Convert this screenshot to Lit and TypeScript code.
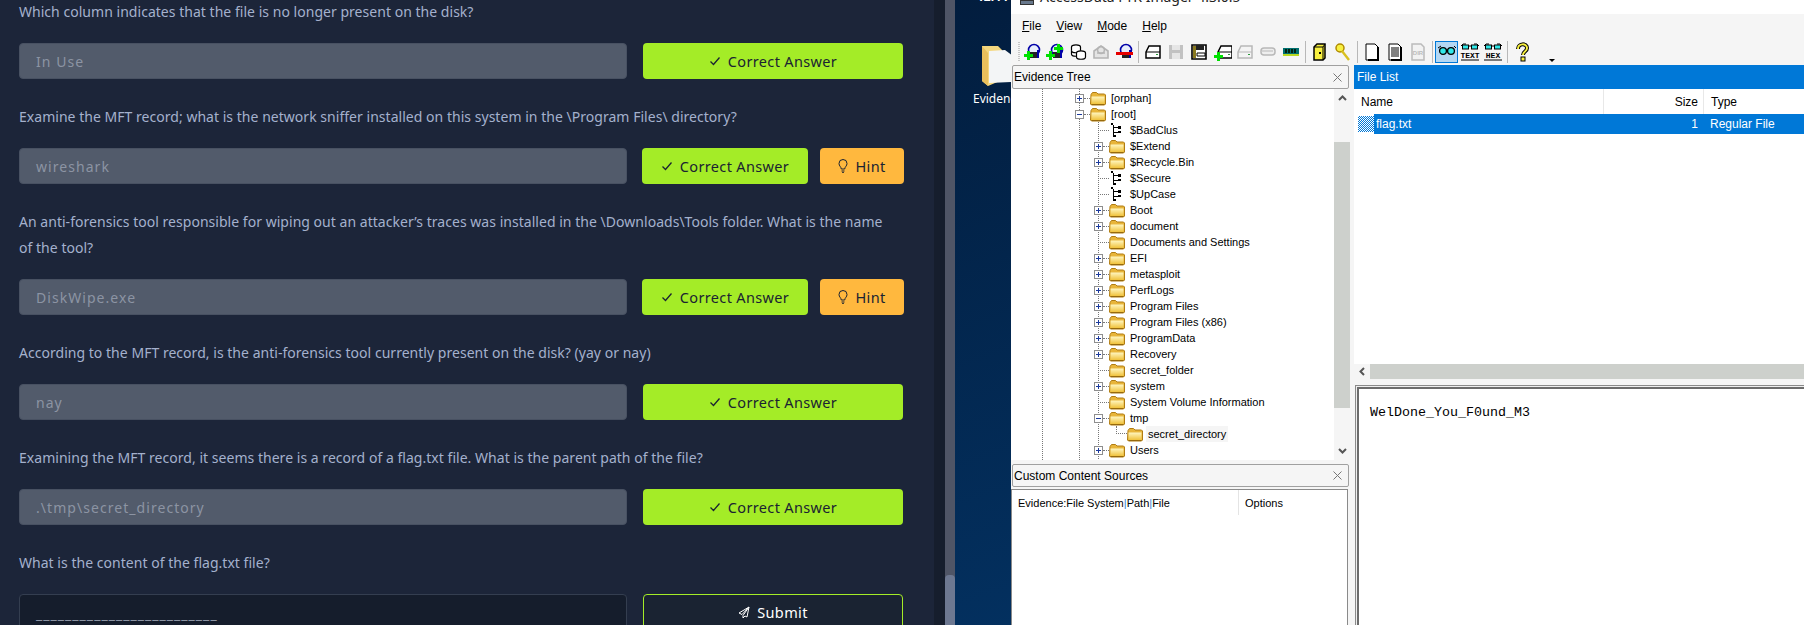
import { LitElement, html, css, svg } from 'lit';
import { customElement } from 'lit/decorators.js';

const drive = (fill = '#fff', line = '#000') => svg`
  <path d="M3 10 6 4h11v12H3z" fill="${fill}" stroke="${line}" stroke-width="1.5"/>
  <path d="M3 10h14" stroke="${line}"/>
  <rect x="13" y="12" width="2" height="1" fill="#2a9a3a"/>`;
const plus = (x: number, y: number) => svg`
  <path d="M${x - 1} ${y - 4}h3v3h3v3h-3v3h-3v-3h-3v-3h3z" fill="#00e000"/>`;
const ring = (stroke = '#0000a8') => svg`
  <circle cx="12" cy="8" r="5.5" fill="#e8eefc" stroke="${stroke}" stroke-width="1.6"/>
  <path d="M8 10h9v6H8z" fill="#222"/><path d="M16 8v8" stroke="#0000a8" stroke-width="2"/>`;
const glasses = svg`
  <path d="M1 6 4 4M19 6l-2-2" stroke="#000" fill="none"/>
  <circle cx="6" cy="9" r="3.4" fill="#30e8e8" stroke="#000" stroke-width="1.3"/>
  <circle cx="14" cy="9" r="3.4" fill="#30e8e8" stroke="#000" stroke-width="1.3"/>
  <path d="M9 8h2" stroke="#000"/>`;
const glassesLabel = (label: string) => svg`
  <path d="M1 4 3 2h3M19 4l-2-2h-3" stroke="#000" fill="none"/>
  <rect x="2.5" y="3" width="6" height="4" fill="#30e8e8" stroke="#000"/>
  <rect x="11.5" y="3" width="6" height="4" fill="#30e8e8" stroke="#000"/>
  <path d="M8 4h4" stroke="#000"/>
  <text x="10" y="15.5" text-anchor="middle" font-family="Liberation Mono" font-size="8" font-weight="700" fill="#000">${label}</text>
  <path d="M1 18h18" stroke="#000"/>`;

type Slot = { art?: unknown; active?: boolean } | 'sep';

const toolbar: Slot[] = [
  { art: svg`${ring()}${plus(6, 13)}` },
  { art: svg`${ring()}${plus(5, 13)}${plus(13, 6)}` },
  { art: svg`<g fill="#fff" stroke="#000" stroke-width="1.2"><ellipse cx="8" cy="5" rx="4.5" ry="2.2"/><path d="M3.5 5v7c0 3 9 3 9 0V5"/><path d="M3.5 8.5c0 3 9 3 9 0"/><ellipse cx="13" cy="11" rx="4.5" ry="2.2"/><path d="M8.5 11v4c0 3 9 3 9 0v-4"/></g>` },
  { art: svg`<path d="M3 16V9l7-5 7 5v7zM6 11h8" fill="#e4e4e4" stroke="#b4b4b4" stroke-width="1.6"/><circle cx="10" cy="8" r="3.4" fill="none" stroke="#b4b4b4" stroke-width="1.5"/>` },
  { art: svg`${ring()}<path d="M2 10h17v3H2z" fill="#e60000"/>` },
  'sep',
  { art: drive() },
  { art: svg`<path d="M3 3h14v14H3z" fill="#c2c2c2"/><path d="M6 3h8v5H6zM6 11h8v6H6z" fill="#e6e6e6"/>` },
  { art: svg`<path d="M3 3h14v14H3z" fill="#fff" stroke="#000" stroke-width="1.6"/><path d="M4 4h3v12H4z" fill="#8a7a20"/><path d="M7 3h8v5H7z" fill="#222"/><path d="M8 11h8v3H8z" fill="#fff" stroke="#000"/>` },
  { art: svg`<g transform="translate(3 0)">${drive()}</g>${plus(6, 14)}` },
  { art: drive('#f4f4f4', '#b8b8b8') },
  { art: svg`<rect x="3" y="6" width="14" height="7" rx="3" fill="#eee" stroke="#b8b8b8" stroke-width="1.5"/><path d="M4 9h11" stroke="#b8b8b8"/>` },
  { art: svg`<rect x="2" y="6" width="16" height="6" fill="#006f6f"/><path d="M4 7h2v4H4zM7 7h2v4H7zM10 7h2v4h-2zM13 7h2v4h-2z" fill="#021"/><path d="M2 12h16v2H2z" fill="#b8d820"/>` },
  'sep',
  { art: svg`<path d="M4 5 7 2h8v14l-2 2H4z" fill="#f8f040" stroke="#000" stroke-width="1.5"/><path d="M4 5h9v13M13 5l2-3" stroke="#000" fill="none"/><rect x="9" y="10" width="2" height="2" fill="#000"/>` },
  { art: svg`<circle cx="7" cy="6" r="4" fill="#f8f040" stroke="#b08a00" stroke-width="1.5"/><path d="m9 9 7 9" stroke="#d8c020" stroke-width="2.4"/>` },
  'sep',
  { art: svg`<path d="M4 2h9l3 3v13H4z" fill="#fff" stroke="#000"/><path d="M16 5v13H6" fill="none" stroke="#000" stroke-width="2"/>` },
  { art: svg`<path d="M4 2h9l3 3v13H4z" fill="#fff" stroke="#000"/><path d="M16 5v13H6" fill="none" stroke="#000" stroke-width="2"/><path d="M6 6h8M6 8h8M6 10h8M6 12h8M6 14h8" stroke="#000"/>` },
  { art: svg`<path d="M4 2h9l3 3v13H4z" fill="#f2f2f2" stroke="#bbb" stroke-width="1.5"/><text x="10" y="13" text-anchor="middle" font-family="Liberation Sans" font-size="6" font-weight="700" fill="#bbb">DIR</text>` },
  'sep',
  { art: glasses, active: true },
  { art: glassesLabel('TEXT') },
  { art: glassesLabel('HEX') },
  'sep',
  { art: svg`<path d="M6 7c0-6 9-6 9-1 0 4-4 3-4 7" fill="none" stroke="#000" stroke-width="4"/><path d="M6 7c0-6 9-6 9-1 0 4-4 3-4 7" fill="none" stroke="#f8f040" stroke-width="2"/><rect x="9" y="15" width="4" height="4" fill="#f8f040" stroke="#000"/>` },
];

type Node = { name: string; level: number; kind: 'closed' | 'open' | 'leaf' | 'meta'; selected?: boolean };

const tree: Node[] = [
  { name: '[orphan]', level: 0, kind: 'closed' },
  { name: '[root]', level: 0, kind: 'open' },
  { name: '$BadClus', level: 1, kind: 'meta' },
  { name: '$Extend', level: 1, kind: 'closed' },
  { name: '$Recycle.Bin', level: 1, kind: 'closed' },
  { name: '$Secure', level: 1, kind: 'meta' },
  { name: '$UpCase', level: 1, kind: 'meta' },
  { name: 'Boot', level: 1, kind: 'closed' },
  { name: 'document', level: 1, kind: 'closed' },
  { name: 'Documents and Settings', level: 1, kind: 'leaf' },
  { name: 'EFI', level: 1, kind: 'closed' },
  { name: 'metasploit', level: 1, kind: 'closed' },
  { name: 'PerfLogs', level: 1, kind: 'closed' },
  { name: 'Program Files', level: 1, kind: 'closed' },
  { name: 'Program Files (x86)', level: 1, kind: 'closed' },
  { name: 'ProgramData', level: 1, kind: 'closed' },
  { name: 'Recovery', level: 1, kind: 'closed' },
  { name: 'secret_folder', level: 1, kind: 'leaf' },
  { name: 'system', level: 1, kind: 'closed' },
  { name: 'System Volume Information', level: 1, kind: 'leaf' },
  { name: 'tmp', level: 1, kind: 'open' },
  { name: 'secret_directory', level: 2, kind: 'leaf', selected: true },
  { name: 'Users', level: 1, kind: 'closed' },
  // only the top of this row's folder shows above the pane edge
  { name: '', level: 1, kind: 'leaf' },
];

type Question = { text: string; answer: string; hint?: boolean };

const questions: Question[] = [
  { text: 'Which column indicates that the file is no longer present on the disk?', answer: 'In Use' },
  { text: 'Examine the MFT record; what is the network sniffer installed on this system in the \\Program Files\\ directory?', answer: 'wireshark', hint: true },
  { text: 'An anti-forensics tool responsible for wiping out an attacker’s traces was installed in the \\Downloads\\Tools folder. What is the name\nof the tool?', answer: 'DiskWipe.exe', hint: true },
  { text: 'According to the MFT record, is the anti-forensics tool currently present on the disk? (yay or nay)', answer: 'nay' },
  { text: 'Examining the MFT record, it seems there is a record of a flag.txt file. What is the parent path of the file?', answer: '.\\tmp\\secret_directory' },
];

const folder = html`<svg class="folder" width="16" height="15" viewBox="0 0 16 15">
  <defs><linearGradient id="fold" x1="0" y1="0" x2="0" y2="1">
    <stop offset="0" stop-color="#fff6c0"/><stop offset="1" stop-color="#f0c23c"/>
  </linearGradient></defs>
  <path d="M1 3.500 2.500 1.500h4L8 3h6.500l1 1v9l-1 1h-13l-1-1z" fill="#e8b53a" stroke="#b07c12"/>
  <path d="M1.500 5.500h13V13h-13z" fill="url(#fold)"/>
  <path d="M1.500 13.500h13" stroke="#96690c"/>
</svg>`;

const metaIcon = html`<svg class="meta" width="12" height="14" viewBox="0 0 12 14" shape-rendering="crispEdges">
  <path d="M1 0h2v2H1zM3 12h3v2H3zM8 3h3v3H8zM8 8h3v2H8z"/>
  <path d="M3 2v11M3 4h6M3 9h6" stroke="#000" fill="none"/>
</svg>`;

const close = html`<svg width="9" height="9" viewBox="0 0 9 9"><path d="m.5.5 8 8m0-8-8 8" stroke="#777"/></svg>`;

@customElement('app-root')
export class AppRoot extends LitElement {
  static styles = css`
    :host {
      display: block;
      width: 1804px;
      height: 625px;
      overflow: hidden;
    }
    .screen {
      display: flex;
      height: 625px;
    }

    /* course panel */
    .panel {
      width: 934px;
      flex: none;
      background: #1c2539;
      padding-left: 19px;
      box-sizing: border-box;
      overflow: hidden;
      font-family: 'Noto Sans', sans-serif;
      color: #a4b1cd;
    }
    .list {
      margin-top: -1px;
    }
    .question {
      margin-bottom: 25px;
    }
    .question p {
      margin: 0 0 18px;
      font-size: 14px;
      line-height: 26px;
      white-space: pre-line;
      letter-spacing: 0.03px;
    }
    .answer {
      display: flex;
      height: 36px;
    }
    .field {
      width: 608px;
      flex: none;
      box-sizing: border-box;
      display: flex;
      align-items: center;
      padding-left: 16px;
      background: #525b6b;
      border: 1px solid #485162;
      border-radius: 4px;
      color: #8c94a3;
      font-size: 14px;
      letter-spacing: 1.05px;
    }
    .field.live {
      background: #151d2c;
      border-color: #343e50;
      color: #8c94a3;
      padding-top: 9px;
      align-items: flex-start;
      height: 40px;
    }
    .btn {
      display: flex;
      align-items: center;
      justify-content: center;
      gap: 7px;
      box-sizing: border-box;
      border-radius: 4px;
      color: #1a2332;
      font-size: 14.5px;
      letter-spacing: 0.35px;
    }
    .ok {
      background: #a4ec27;
      margin-left: 16px;
      width: 260px;
    }
    .ok.short {
      margin-left: 15px;
      width: 166px;
    }
    .hint {
      background: #ffb83e;
      margin-left: 12px;
      width: 84px;
    }
    .submit {
      background: #1a2332;
      border: 1px solid #a4ec27;
      color: #fff;
      margin-left: 16px;
      width: 260px;
      height: 36px;
    }
    .rail {
      width: 11px;
      flex: none;
      background: #161e2d;
    }
    .track {
      width: 10px;
      flex: none;
      background: #4f5566;
      display: flex;
      flex-direction: column;
      justify-content: flex-end;
    }
    .track div {
      height: 50px;
      background: #6d7891;
      border-radius: 4px 4px 0 0;
    }

    /* desktop strip */
    .desktop {
      width: 56px;
      flex: none;
      overflow: hidden;
      background: linear-gradient(160deg, #021d3e, #03305f);
      color: #fff;
      font: 12px 'Noto Sans', sans-serif;
    }
    .clock {
      height: 3px;
      overflow: hidden;
      display: flex;
      align-items: flex-end;
      padding-left: 22px;
      font-weight: 700;
      line-height: 12px;
    }
    .shortcut {
      display: flex;
      flex-direction: column;
      padding: 42px 0 0 18px;
      white-space: nowrap;
    }
    .shortcut svg {
      margin-left: 9px;
    }
    .shortcut span {
      margin-top: 4px;
      line-height: 18px;
    }

    /* imager window */
    .window {
      flex: 1;
      min-width: 0;
      background: #f5f5f5;
      font: 12px 'Liberation Sans', sans-serif;
      color: #000;
      display: flex;
      flex-direction: column;
    }
    .title {
      height: 14px;
      flex: none;
      background: #fff;
      overflow: hidden;
      display: flex;
      align-items: flex-end;
      padding-left: 9px;
      gap: 6px;
      font: 14px/14px 'Noto Sans', sans-serif;
      color: #222;
    }
    .title span {
      position: relative;
      top: -10px;
    }
    .title i {
      display: block;
      width: 14px;
      height: 5px;
      align-self: flex-start;
      background: #68788c;
      border: 1px solid #333;
      box-sizing: border-box;
    }
    .menu {
      height: 24px;
      flex: none;
      display: flex;
      align-items: center;
      padding-left: 11px;
    }
    .menu span {
      margin-right: 15px;
    }
    .tools {
      height: 27px;
      flex: none;
      display: flex;
      align-items: flex-start;
      padding: 3px 0 0 7px;
      box-sizing: border-box;
    }
    .grip {
      width: 2px;
      height: 20px;
      margin: 1px 0 0;
      background: repeating-linear-gradient(#c6c6c6 0 1px, transparent 1px 2px);
    }
    .slot {
      width: 23px;
      height: 22px;
      display: flex;
      align-items: center;
      justify-content: center;
      box-sizing: border-box;
    }
    .slot.active {
      background: #b3d7f3;
      border: 1px solid #0078d7;
    }
    .sep {
      width: 6px;
      height: 22px;
      display: flex;
      justify-content: center;
    }
    .sep div {
      width: 1px;
      background: #b8b8b8;
    }
    .caret {
      width: 0;
      height: 0;
      margin: 18px 0 0 16px;
      border: 3px solid transparent;
      border-top: 3px solid #000;
      border-bottom: 0;
    }
    .main {
      flex: 1;
      min-height: 0;
      display: flex;
    }
    .left {
      width: 343px;
      flex: none;
      display: flex;
      flex-direction: column;
    }
    .head {
      height: 24px;
      flex: none;
      box-sizing: border-box;
      margin: 0 5px 0 1px;
      padding: 0 6px 0 1px;
      display: flex;
      align-items: center;
      justify-content: space-between;
      border: 1px solid #a0a0a0;
      border-radius: 2px;
    }
    .tree-wrap {
      height: 371px;
      flex: none;
      display: flex;
      margin-right: 4px;
    }
    .tree {
      width: 323px;
      padding-top: 1px;
      box-sizing: border-box;
      overflow: hidden;
      font-size: 11px;
      background-color: #fff;
      background-image:
        repeating-linear-gradient(#777 0 1px, transparent 1px 2px),
        repeating-linear-gradient(#777 0 1px, transparent 1px 2px),
        repeating-linear-gradient(#777 0 1px, transparent 1px 2px);
      background-size: 1px 100%, 1px 100%, 1px 100%;
      background-position: 31px 0, 68px 0, 87px 33px;
      background-repeat: no-repeat;
    }
    .row {
      height: 16px;
      display: flex;
      align-items: center;
      white-space: nowrap;
    }
    .box {
      width: 9px;
      height: 9px;
      flex: none;
      box-sizing: border-box;
      background: #fff;
      border: 1px solid #8e8e8e;
      position: relative;
    }
    .box::before,
    .box.closed::after {
      content: '';
      position: absolute;
      background: #1c3a9c;
    }
    .box::before {
      left: 1px;
      right: 1px;
      top: 3px;
      height: 1px;
    }
    .box.closed::after {
      top: 1px;
      bottom: 1px;
      left: 3px;
      width: 1px;
    }
    .tick {
      width: 6px;
      flex: none;
      border-top: 1px dotted #777;
    }
    .tick.long {
      width: 11px;
      margin-left: 4px;
    }
    .elbow {
      width: 11px;
      height: 8px;
      flex: none;
      margin: 0 0 8px 4px;
      border-left: 1px dotted #777;
      border-bottom: 1px dotted #777;
      box-sizing: border-box;
    }
    .folder {
      flex: none;
    }
    .meta {
      flex: none;
      margin: 0 3px 0 1px;
    }
    .label {
      margin-left: 3px;
      padding: 0 2px;
      line-height: 16px;
    }
    .label.selected {
      background: #f5f5f5;
    }
    .bar {
      width: 16px;
      flex: none;
      background: #f5f5f5;
      display: flex;
      flex-direction: column;
      align-items: center;
    }
    .bar svg {
      flex: none;
      margin: 6px 0;
    }
    .bar .thumb {
      width: 16px;
      flex: 1;
      margin-top: 35px;
      margin-bottom: 34px;
      background: #cdd0cc;
    }
    .custom-gap {
      height: 4px;
      flex: none;
    }
    .custom-head {
      height: 23px;
    }
    .sources {
      flex: 1;
      margin: 2px 6px 0 0;
      background: #fff;
      border: 1px solid #8a8a8a;
      border-bottom: 0;
      font-size: 11px;
    }
    .cols {
      display: grid;
      grid-template-columns: 226px 1fr;
      height: 25px;
      align-items: center;
    }
    .cols span {
      padding-left: 6px;
      height: 25px;
      line-height: 26px;
    }
    .cols span + span {
      border-left: 1px solid #e4e4e4;
    }
    .cols b {
      font-weight: 400;
      color: #2e86d4;
    }
    .right {
      flex: 1;
      min-width: 0;
      display: flex;
      flex-direction: column;
    }
    .files-head {
      height: 24px;
      flex: none;
      background: #0078d7;
      color: #fff;
      line-height: 24px;
      padding-left: 3px;
    }
    .files {
      height: 275px;
      flex: none;
      background: #fff;
    }
    .file-grid,
    .file-row {
      display: grid;
      grid-template-columns: 249px 100px 1fr;
    }
    .file-grid {
      height: 25px;
      line-height: 26px;
    }
    .file-grid span {
      padding-left: 7px;
    }
    .file-grid span + span {
      border-left: 1px solid #e8e8e8;
    }
    .right-align {
      text-align: right;
      padding-right: 5px;
    }
    .file-row {
      height: 19px;
      line-height: 20px;
      color: #fff;
    }
    .file-row > span {
      background: #0078d7;
    }
    .file-row .name {
      display: flex;
      align-items: center;
      background: linear-gradient(90deg, #fff 20px, #0078d7 20px);
    }
    .dither {
      width: 16px;
      height: 16px;
      margin-left: 4px;
      background: repeating-conic-gradient(#0078d7 0 25%, #fff 0 50%) 0 0 / 2px 2px;
    }
    .file-row .name em {
      font-style: normal;
      margin-left: 2px;
    }
    .file-row .type {
      padding-left: 7px;
    }
    .hbar {
      height: 15px;
      flex: none;
      display: flex;
      align-items: center;
    }
    .hbar svg {
      margin: 0 5px 0 5px;
      flex: none;
    }
    .hbar div {
      flex: 1;
      height: 15px;
      background: #cdd0cc;
    }
    .viewer {
      flex: 1;
      margin: 6px 0 0 1px;
      background: #fff;
      border: 1px solid #8a8a8a;
      border-right: 0;
      border-bottom: 0;
      box-shadow: inset 1px 1px 0 #eee, inset 3px 3px 0 #6c6c6c;
      padding: 18px 0 0 14px;
      font: 13.33px/18px 'Liberation Mono', monospace;
    }
  `;

  renderQuestion(q: Question) {
    return html`
      <div class="question">
        <p>${q.text}</p>
        <div class="answer">
          <div class="field">${q.answer}</div>
          <div class="btn ok ${q.hint ? 'short' : ''}">
            <svg width="12" height="12" viewBox="0 0 12 12"><path d="m1.500 6.500 3 3 6-7" fill="none" stroke="#1a2332" stroke-width="1.300"/></svg>
            Correct Answer
          </div>
          ${q.hint
            ? html`<div class="btn hint">
                <svg width="10" height="14" viewBox="0 0 10 14"><path d="M3.300 10C3 7.500 1 7 1 4.500a4 4 0 0 1 8 0C9 7 7 7.500 6.700 10zM3.500 12h3M4.200 13.500h1.600" fill="none" stroke="#1a2332"/></svg>
                Hint
              </div>`
            : ''}
        </div>
      </div>
    `;
  }

  renderNode(n: Node) {
    const indent = 64 + (n.level * 19);
    const isBranch = n.kind === 'closed' || n.kind === 'open';
    return html`
      <div class="row" style="padding-left:${indent - (n.level === 2 ? 1 : 0)}px">
        ${isBranch ? html`<span class="box ${n.kind}"></span><span class="tick"></span>` : ''}
        ${n.level === 2 ? html`<span class="elbow"></span>` : ''}
        ${!isBranch && n.level !== 2 ? html`<span class="tick long"></span>` : ''}
        ${n.kind === 'meta' ? metaIcon : folder}
        ${n.name ? html`<span class="label ${n.selected ? 'selected' : ''}">${n.name}</span>` : ''}
      </div>
    `;
  }

  renderSlot(s: Slot) {
    if (s === 'sep') return html`<div class="sep"><div></div></div>`;
    return html`<div class="slot ${s.active ? 'active' : ''}">
      <svg width="20" height="20" viewBox="0 0 20 20">${s.art}</svg>
    </div>`;
  }

  render() {
    return html`
      <div class="screen">
        <section class="panel">
          <div class="list">
            ${questions.map((q) => this.renderQuestion(q))}
            <div class="question">
              <p>What is the content of the flag.txt file?</p>
              <div class="answer">
                <div class="field live">_________________________</div>
                <div class="btn submit">
                  <svg width="12" height="13" viewBox="0 0 12 13"><path d="M11 1 1 7l3 1.500L11 1 5 9.500V12l2-2 2 1z" fill="none" stroke="#fff"/></svg>
                  Submit
                </div>
              </div>
            </div>
          </div>
        </section>
        <div class="rail"></div>
        <div class="track"><div></div></div>

        <div class="desktop">
          <div class="clock"><span>12:44</span></div>
          <div class="shortcut">
            <svg width="32" height="41" viewBox="0 0 32 41">
              <path d="M0 1h16l4 4v30L6 41 0 36z" fill="#f4d77e"/>
              <path d="M7 6l16-1 8 6v26l-24 1z" fill="#f3f5f6"/>
              <path d="M0 1v35l6 5V8z" fill="#e9bf5c"/>
            </svg>
            <span>Evidence</span>
          </div>
        </div>

        <div class="window">
          <div class="title"><i></i><span>AccessData FTK Imager 4.3.0.5</span></div>
          <div class="menu">
            <span><u>F</u>ile</span><span><u>V</u>iew</span><span><u>M</u>ode</span><span><u>H</u>elp</span>
          </div>
          <div class="tools">
            <div class="grip"></div>
            ${toolbar.map((s) => this.renderSlot(s))}
            <div class="caret"></div>
          </div>
          <div class="main">
            <div class="left">
              <div class="head"><span>Evidence Tree</span>${close}</div>
              <div class="tree-wrap">
                <div class="tree">${tree.map((n) => this.renderNode(n))}</div>
                <div class="bar">
                  <svg width="9" height="6" viewBox="0 0 9 6"><path d="m1 5 3.500-3.500L8 5" fill="none" stroke="#555" stroke-width="2"/></svg>
                  <div class="thumb"></div>
                  <svg width="9" height="6" viewBox="0 0 9 6"><path d="m1 1 3.500 3.500L8 1" fill="none" stroke="#555" stroke-width="2"/></svg>
                </div>
              </div>
              <div class="custom-gap"></div>
              <div class="head custom-head"><span>Custom Content Sources</span>${close}</div>
              <div class="sources">
                <div class="cols">
                  <span>Evidence:File System<b>|</b>Path<b>|</b>File</span>
                  <span>Options</span>
                </div>
              </div>
            </div>
            <div class="right">
              <div class="files-head">File List</div>
              <div class="files">
                <div class="file-grid">
                  <span>Name</span><span class="right-align">Size</span><span>Type</span>
                </div>
                <div class="file-row">
                  <span class="name"><i class="dither"></i><em>flag.txt</em></span>
                  <span class="right-align">1</span>
                  <span class="type">Regular File</span>
                </div>
              </div>
              <div class="hbar">
                <svg width="6" height="9" viewBox="0 0 6 9"><path d="M5 1 1.500 4.500 5 8" fill="none" stroke="#555" stroke-width="2"/></svg>
                <div></div>
              </div>
              <div class="viewer">WelDone_You_F0und_M3</div>
            </div>
          </div>
        </div>
      </div>
    `;
  }
}
